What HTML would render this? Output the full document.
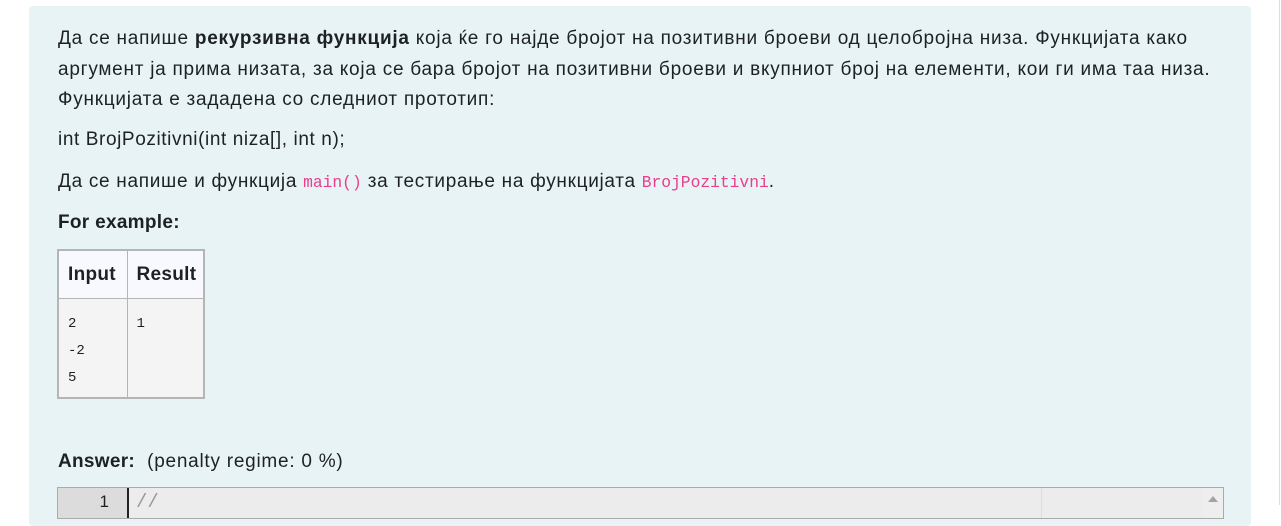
<!DOCTYPE html>
<html><head><meta charset="utf-8"><style>
html,body{margin:0;padding:0;background:#fff;width:1281px;height:505px;overflow:hidden}
body{font-family:"Liberation Sans",sans-serif;color:#1d2125;font-size:19px}
.rv{position:absolute;left:1279px;top:0;width:1px;height:505px;background:#ddd}
.panel{position:absolute;left:29px;top:6px;width:1222px;height:520px;background:#e7f3f5;border-radius:4px}
.t{position:absolute;left:58px;white-space:nowrap;letter-spacing:0.75px}
code{font-family:"Liberation Mono",monospace;color:#e83e8c;font-size:16.3px;letter-spacing:0}
table{position:absolute;left:57px;top:249px;border-collapse:collapse;border:2px solid #b5b5b5;table-layout:fixed}
th{background:#f8f9fe;border:1px solid #b5b5b5;height:47px;padding:0 0 0 9px;text-align:left;font-size:19px;letter-spacing:0.3px}
td{background:#f4f4f4;border:1px solid #b5b5b5;vertical-align:top;padding:12px 9px 0;height:86px;font-family:"Liberation Mono",monospace;font-size:14px;line-height:27px;color:#1d2125}
.ed{position:absolute;left:57px;top:487px;width:1165px;height:30px;border:1px solid #aaa;background:#ececec}
.gut{position:absolute;left:0;top:0;width:69px;height:30px;background:#dcdcdc;border-right:2px solid #222}
</style></head><body>
<div class="rv"></div>
<div class="panel"></div>
<div class="t" style="top:28px">Да се напише <b>рекурзивна функција</b> која ќе го најде бројот на позитивни броеви од целобројна низа. Функцијата како</div>
<div class="t" style="top:59px">аргумент ја прима низата, за која се бара бројот на позитивни броеви и вкупниот број на елементи, кои ги има таа низа.</div>
<div class="t" style="top:89px">Функцијата е зададена со следниот прототип:</div>
<div class="t" style="top:129px;letter-spacing:0.6px">int BrojPozitivni(int niza[], int n);</div>
<div class="t" style="top:171px;letter-spacing:0.7px">Да се напише и функција <code>main()</code> за тестирање на функцијата <code>BrojPozitivni</code>.</div>
<div class="t" style="top:212px;font-weight:bold;letter-spacing:0.3px">For example:</div>
<table><colgroup><col style="width:69px"><col style="width:77px"></colgroup><tr><th>Input</th><th>Result</th></tr><tr><td>2<br>-2<br>5</td><td>1</td></tr></table>
<div class="t" style="top:451px"><b style="letter-spacing:0.3px">Answer:</b>&nbsp;&nbsp;(penalty regime: 0 %)</div>
<div class="ed"><div class="gut"><span style="position:absolute;right:18px;top:4px;font-size:17px">1</span></div>
<span style="position:absolute;left:78px;top:3px;font-family:'Liberation Mono',monospace;color:#999">//</span>
<div style="position:absolute;left:983px;top:0;width:1px;height:30px;background:#ddd"></div>
<div style="position:absolute;left:1145px;top:0;width:20px;height:30px;background:#eee"></div>
<div style="position:absolute;left:1150px;top:8px;border-left:5px solid transparent;border-right:5px solid transparent;border-bottom:6px solid #a3a3a3"></div>
</div>
</body></html>
